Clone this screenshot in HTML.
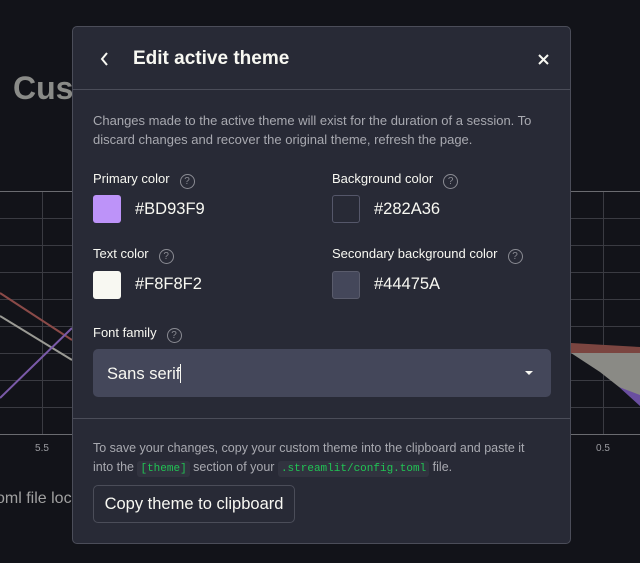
<!DOCTYPE html>
<html><head><style>
body{margin:0;width:640px;height:563px;background:#121319;position:relative;overflow:hidden;font-family:"Liberation Sans",sans-serif;}
.abs{position:absolute}
.modal{position:absolute;left:72px;top:26px;width:499px;height:518px;background:#282a36;border:1px solid #4b4d59;border-radius:5px;box-sizing:border-box;}
.lbl{position:absolute;font-size:13px;color:#f8f8f2}
.q{display:inline-block;width:13px;height:13px;border:1.3px solid #8a8b93;border-radius:50%;font-size:10px;line-height:13px;text-align:center;color:#8a8b93;margin-left:10px;vertical-align:-1px;}
.sw{position:absolute;width:28px;height:28px;border-radius:3px;box-sizing:border-box}
.hex{position:absolute;font-size:16.5px;color:#f8f8f2}
code{font-family:"Liberation Mono",monospace;font-size:11px;color:#21c354;background:#31333f;border-radius:3px;padding:2px 3px}
</style></head><body>
<svg class="abs" style="left:0;top:0" width="640" height="563">
<g stroke="#3a3b42" stroke-width="1">
<line x1="0" y1="218.5" x2="640" y2="218.5"/><line x1="0" y1="245.5" x2="640" y2="245.5"/><line x1="0" y1="272.5" x2="640" y2="272.5"/><line x1="0" y1="299.5" x2="640" y2="299.5"/><line x1="0" y1="326.5" x2="640" y2="326.5"/><line x1="0" y1="353.5" x2="640" y2="353.5"/><line x1="0" y1="380.5" x2="640" y2="380.5"/><line x1="0" y1="407.5" x2="640" y2="407.5"/>
<line x1="42.5" y1="191" x2="42.5" y2="434"/><line x1="603.5" y1="191" x2="603.5" y2="434"/>
</g>
<line x1="0" y1="191.5" x2="640" y2="191.5" stroke="#6a6b70"/>
<line x1="0" y1="434.5" x2="640" y2="434.5" stroke="#6a6b70"/>
<line x1="0" y1="293" x2="72" y2="340" stroke="#8a4a48" stroke-width="2"/>
<line x1="0" y1="316" x2="72" y2="360" stroke="#9a9a94" stroke-width="2"/>
<line x1="0" y1="398" x2="72" y2="328" stroke="#7a5aa8" stroke-width="2"/>
<polygon points="571,343 640,347 640,353 571,353" fill="#7b4540"/>
<polygon points="571,353 640,353 640,400 619,387 600,372" fill="#8a8a85"/>
<polygon points="619,387 640,395 640,406" fill="#6a4fa0"/>
<text x="42" y="451" fill="#9a9ba0" font-size="10" text-anchor="middle" font-family="Liberation Sans">5.5</text>
<text x="603" y="451" fill="#9a9ba0" font-size="10" text-anchor="middle" font-family="Liberation Sans">0.5</text>
<text x="13" y="99" fill="#8a8b88" font-size="32" font-weight="bold" font-family="Liberation Sans">Cus</text>
<text x="-4" y="503" fill="#a0a0a0" font-size="16" font-family="Liberation Sans">oml file loc</text>
</svg>
<div class="modal">
 <svg class="abs" style="left:26px;top:24px" width="12" height="16"><path d="M8 2 L3 8 L8 14" stroke="#f8f8f2" stroke-width="2" fill="none"/></svg>
 <div class="abs" style="left:60px;top:21px;font-size:19px;font-weight:bold;color:#f8f8f2">Edit active theme</div>
 <svg class="abs" style="left:465px;top:27px" width="11" height="11"><path d="M1 1 L10 10 M10 1 L1 10" stroke="#f8f8f2" stroke-width="2"/></svg>
 <div class="abs" style="left:0;top:62px;width:497px;height:1px;background:#4b4d59"></div>
 <div class="abs" style="left:20px;top:84px;width:450px;font-size:13px;line-height:19px;color:#a8a9b0">Changes made to the active theme will exist for the duration of a session. To discard changes and recover the original theme, refresh the page.</div>
 <div class="lbl" style="left:20px;top:144px">Primary color<span class="q">?</span></div>
 <div class="sw" style="left:20px;top:168px;background:#bd93f9"></div>
 <div class="hex" style="left:62px;top:173px">#BD93F9</div>
 <div class="lbl" style="left:259px;top:144px">Background color<span class="q">?</span></div>
 <div class="sw" style="left:259px;top:168px;background:#282a36;border:1px solid #55576a"></div>
 <div class="hex" style="left:301px;top:173px">#282A36</div>
 <div class="lbl" style="left:20px;top:219px">Text color<span class="q">?</span></div>
 <div class="sw" style="left:20px;top:244px;background:#f8f8f2"></div>
 <div class="hex" style="left:62px;top:248px">#F8F8F2</div>
 <div class="lbl" style="left:259px;top:219px">Secondary background color<span class="q">?</span></div>
 <div class="sw" style="left:259px;top:244px;background:#44475a;border:1px solid #5a5c6c"></div>
 <div class="hex" style="left:301px;top:248px">#44475A</div>
 <div class="lbl" style="left:20px;top:298px">Font family<span class="q">?</span></div>
 <div class="abs" style="left:20px;top:322px;width:458px;height:48px;background:#44475a;border-radius:5px"></div>
 <div class="abs" style="left:34px;top:337px;font-size:16.5px;color:#f8f8f2">Sans serif<span style="display:inline-block;width:1px;height:19px;background:#f8f8f2;vertical-align:-4px"></span></div>
 <svg class="abs" style="left:451px;top:343px" width="10" height="6"><path d="M1 1 H9 L5 5Z" fill="#f8f8f2"/></svg>
 <div class="abs" style="left:0;top:391px;width:497px;height:1px;background:#4b4d59"></div>
 <div class="abs" style="left:20px;top:412px;width:445px;font-size:12.5px;line-height:19px;color:#a8a9b0">To save your changes, copy your custom theme into the clipboard and paste it into the <code>[theme]</code> section of your <code>.streamlit/config.toml</code> file.</div>
 <div class="abs" style="left:20px;top:458px;width:202px;height:38px;box-sizing:border-box;border:1px solid #4b4d59;border-radius:5px;font-size:16.5px;color:#f8f8f2;line-height:36px;text-align:center">Copy theme to clipboard</div>
</div>
</body></html>
